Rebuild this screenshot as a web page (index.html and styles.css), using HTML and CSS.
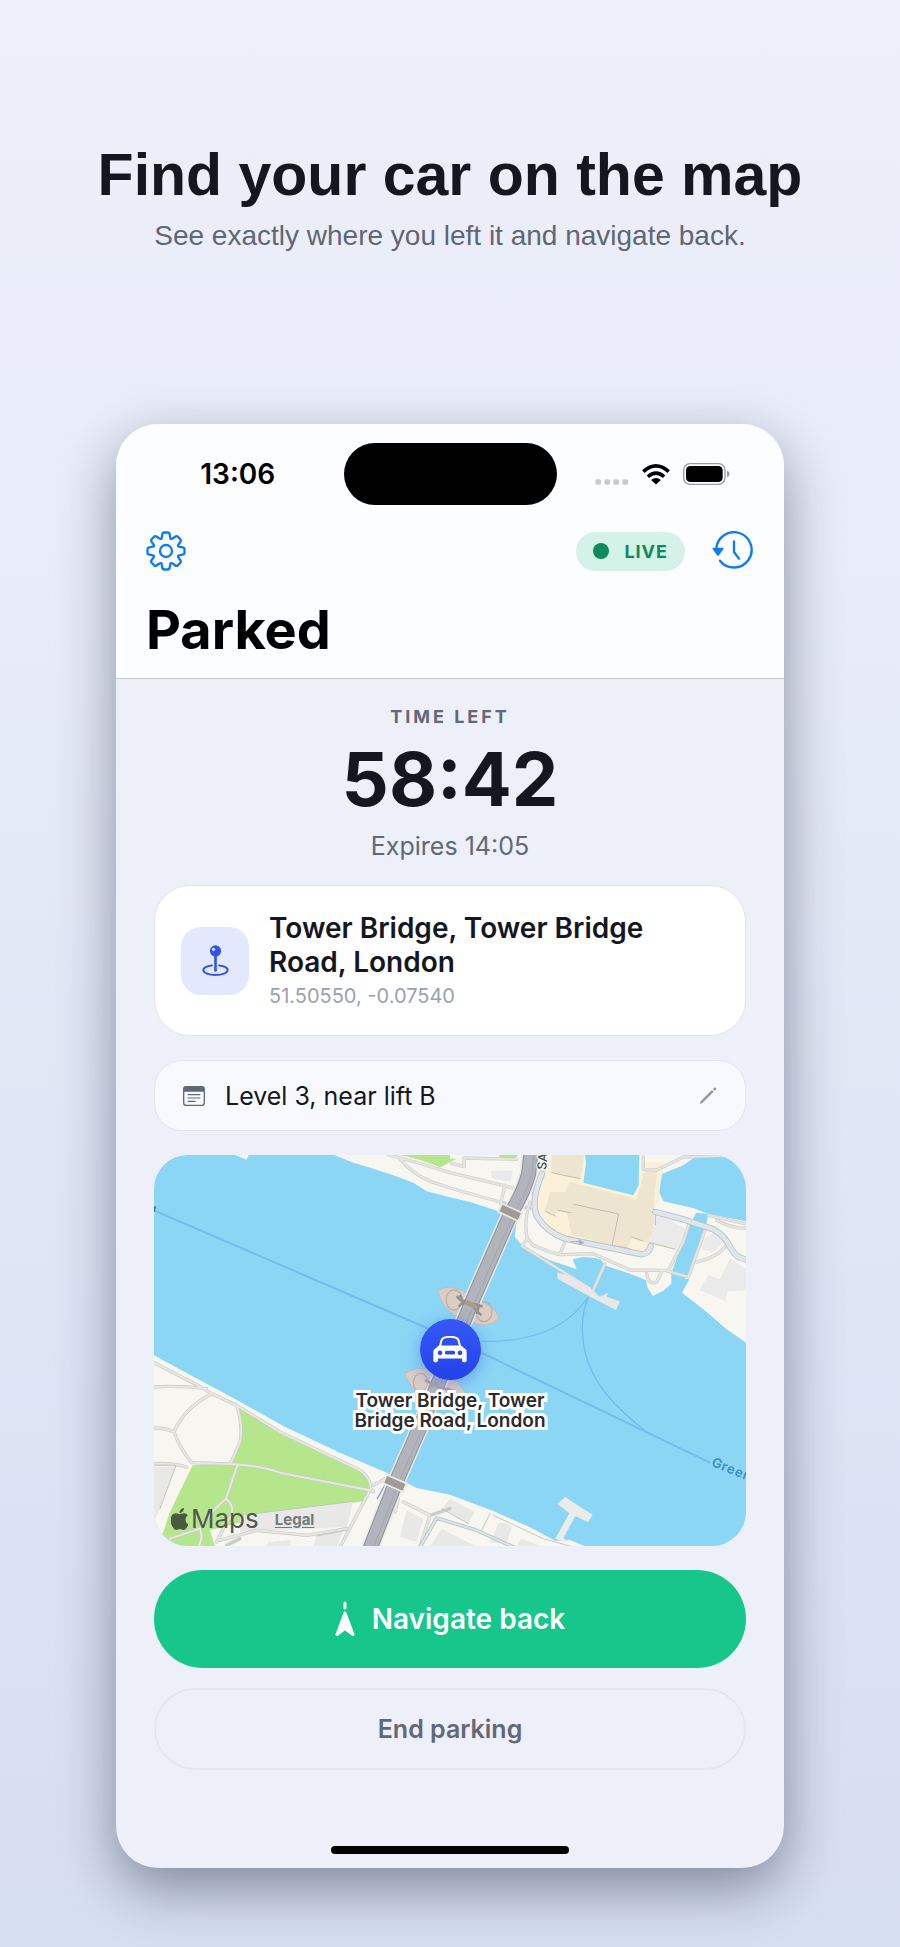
FILE: index.html
```html
<!DOCTYPE html>
<html lang="en">
<head>
<meta charset="utf-8">
<meta name="viewport" content="width=device-width, initial-scale=1">
<title>Find your car on the map</title>
<link rel="stylesheet" href="styles.css">
</head>
<body>
<main class="page">
  <header class="intro">
    <h1 class="intro-title">Find your car on the map</h1>
    <p class="intro-text">See exactly where you left it and navigate back.</p>
  </header>

  <section class="phone" aria-label="Parking app">
    <div class="top">
      <div class="status">
        <span class="clock">13:06</span>
        <span class="island"></span>
        <span class="indicators">
          <svg class="dots" viewBox="0 0 102 18" aria-hidden="true"><g fill="#c9cacd"><rect x="1" y="1" width="17" height="16" rx="5"/><rect x="28" y="1" width="17" height="16" rx="5"/><rect x="55" y="1" width="17" height="16" rx="5"/><rect x="82" y="1" width="17" height="16" rx="5"/></g></svg>
          <svg class="wifi" viewBox="0 0 86 64" aria-hidden="true"><path d="M4 23Q43-12 82 23M18 39Q43 17 68 39" fill="none" stroke="#000" stroke-width="11"/><path d="M43 63 28 49Q43 37 58 49Z"/></svg>
          <svg class="battery" viewBox="0 0 141 66" aria-hidden="true"><rect x="2" y="2" width="124" height="62" rx="19" fill="none" stroke="#9b9b9e" stroke-width="4"/><rect x="9" y="9" width="110" height="48" rx="13"/><path d="M132 23q8 3 8 10t-8 10Z" fill="#9b9b9e"/></svg>
        </span>
      </div>
      <div class="toolbar">
        <button class="icon-button" type="button" aria-label="Settings">
          <svg class="gear" viewBox="-20 -20 40 40" fill="none" stroke="#0f7bf2" stroke-width="2.300">
            <defs><path id="tooth" stroke-linecap="round" d="M-5-12.100Q-4.300-12.500-4.100-14L-3.700-16.500Q-3.400-18.500-1.800-18.500H1.800Q3.400-18.500 3.700-16.500L4.100-14Q4.300-12.500 5-12.100"/></defs>
            <use href="#tooth"/><use href="#tooth" transform="rotate(45)"/><use href="#tooth" transform="rotate(90)"/><use href="#tooth" transform="rotate(135)"/><use href="#tooth" transform="rotate(180)"/><use href="#tooth" transform="rotate(225)"/><use href="#tooth" transform="rotate(270)"/><use href="#tooth" transform="rotate(315)"/>
            <circle r="6"/>
          </svg>
        </button>
        <div class="toolbar-end">
          <span class="live"><span class="live-dot"></span>LIVE</span>
          <button class="icon-button" type="button" aria-label="History">
            <svg class="history" viewBox="0 0 126 118" fill="none" stroke="#0f7bf2" stroke-width="7" stroke-linecap="round" stroke-linejoin="round"><path d="M13 52A53 53 0 1 1 24 88M66 30V62L81 82"/><path d="M4 52H32L18 71Z" fill="#0f7bf2" stroke-width="5"/></svg>
          </button>
        </div>
      </div>
      <h2 class="screen-title">Parked</h2>
    </div>

    <div class="content">
      <div class="timer">
        <p class="timer-label">TIME LEFT</p>
        <p class="timer-value">58:42</p>
        <p class="timer-expiry">Expires 14:05</p>
      </div>

      <article class="place">
        <span class="place-icon">
          <svg viewBox="0 0 88 98" aria-hidden="true"><g fill="none" stroke="#2f55ec"><path d="M33 64C17 66 7 71 7 78 7 87 24 93 44 93S81 87 81 78C81 71 71 66 55 64" stroke-width="6" stroke-linecap="round"/><path d="M44 28V79" stroke-width="8" stroke-linecap="round"/></g><circle cx="44" cy="20" r="17" fill="#2f55ec"/><circle cx="38" cy="15" r="5" fill="#dfe5ff"/></svg>
        </span>
        <div class="place-text">
          <h3 class="place-name">Tower Bridge, Tower Bridge Road, London</h3>
          <p class="place-coords">51.50550, -0.07540</p>
        </div>
      </article>

      <div class="note">
        <svg class="note-icon" viewBox="0 0 66 60" aria-hidden="true"><rect x="2" y="2" width="62" height="56" rx="8" fill="none" stroke="#626877" stroke-width="4"/><path d="M2 17V9q0-8 8-8h46q8 0 8 8v8Z" fill="#626877"/><path d="M14 26H52M14 36H52M14 46H38" stroke="#626877" stroke-width="3.500"/></svg>
        <span class="note-text">Level 3, near lift B</span>
        <button class="icon-button" type="button" aria-label="Edit note">
          <svg class="pencil" viewBox="0 0 54 54" fill="#9298a8"><path d="M2 51 5 43 39 9 44 14 10 48ZM42 6 45 3Q48 0 51 3T50 9L47 11Z"/></svg>
        </button>
      </div>

      <div class="map">
        <svg class="map-art" viewBox="0 0 1776 1173" preserveAspectRatio="xMidYMid slice" aria-hidden="true">
          <rect width="1776" height="1173" fill="#8bd6f5"/>

          <!-- north bank -->
          <g transform="translate(888 -39)" stroke-linejoin="round" stroke-linecap="round">
            <path d="M-645 39H-604L-610 53ZM-347 39L-290 62-230 80-170 100-110 122-70 148 0 166 60 180 146 208 172 222 200 240 194 284 220 314 300 355 380 382 368 352 400 345 440 348 470 372 540 395 588 415 592 436 608 462 640 446 664 425 664 385 700 410 718 412 696 452 758 500 830 562 888 602V39Z" fill="#f7f6f1"/>
            <path d="M-152 39H0L0 50 20 50-30 76Q-90 50-152 39M148 39H205L195 48 148 51Z" fill="#b5e68c"/>
            <path d="M275 39H405L400 120 545 155 565 130 580 60 640 60 632 172 612 200 610 320 580 330 320 285 255 190Z" fill="#fbf1d9"/>
            <path d="M305 39H402L392 110 303 94ZM360 120L560 172 585 82 622 84 612 175 612 240 598 302 545 290 530 320 485 312 365 278 350 212 320 205 315 222 285 208 300 150 345 150Z" fill="#eee5d1"/>
            <path d="M405 39H568L566 130 550 160 400 122 408 62ZM735 45L888 39V238L775 216 730 198 640 178 628 150 636 96 700 70Z" fill="#8bd6f5"/>
            <path d="M738 212L775 216 768 250 722 400 700 412 664 396 692 310Z" fill="#8bd6f5"/>
            <path d="M380 365L420 350 452 352 462 368 436 430Z" fill="#8bd6f5"/>
            <path d="M618 215L706 258 700 300 676 322 600 300ZM122 86H188L182 120 125 108ZM760 290L790 272 820 300 790 330 755 322ZM840 350L888 380V445L832 448 826 478 748 444 775 400 810 412Z" fill="#ebeaea"/>
            <path d="M305 92L390 110M372 187L506 216 486 310 540 320M286 208L316 222M324 205L362 212M545 284L580 298M616 218V248M600 302L676 322" fill="none" stroke="#c4bdae" stroke-width="3"/>
            <g fill="none" stroke="#cfcfcc" stroke-width="10"><path d="M-185 39Q-100 60 0 92L160 130 250 155M-150 50Q-120 90-60 118L0 138 150 180 240 200M5 64L42 74 42 48 200 52M165 130L152 185M240 180Q220 240 232 290L250 310 300 330 330 338 430 335 540 384 645 385 715 405 770 250M232 290L216 312 420 440M345 300L330 335M465 365L425 455M580 45V82L620 84 700 45 888 39M720 235L700 300 655 385M590 395Q595 430 620 420L635 390M775 220L888 246M800 235Q850 262 888 258M740 360Q820 340 832 300"/></g>
            <g fill="none" stroke="#e4e4e1" stroke-width="6"><path d="M-185 39Q-100 60 0 92L160 130 250 155M-150 50Q-120 90-60 118L0 138 150 180M5 64L42 74 42 48 200 52M165 130L152 185M240 180Q220 240 232 290L250 310 300 330 330 338 430 335 540 384 645 385 715 405 770 250M232 290L216 312 420 440M345 300L330 335M465 365L425 455M580 45V82L620 84 700 45 888 39M720 235L700 300 655 385M590 395Q595 430 620 420L635 390M775 220L888 246M800 235Q850 262 888 258M740 360Q820 340 832 300"/></g>
            <path d="M276 95Q240 180 262 225 290 270 345 290L575 337Q598 334 602 312M616 210L700 232 790 262Q825 280 842 318 860 350 888 352" fill="none" stroke="#b7bfc6" stroke-width="19"/>
            <path d="M276 95Q240 180 262 225 290 270 345 290L575 337Q598 334 602 312M616 210L700 232 790 262Q825 280 842 318 860 350 888 352" fill="none" stroke="#dfe5ea" stroke-width="14"/>
            <path d="M362 297H386V291L404 303 386 309V301H362Z" fill="#aeb5bb"/>
            <path d="M322 392L345 397 420 438 436 452 450 464 474 452 470 464 510 478 498 504 432 470 322 410Z" fill="#e8e8e6"/>
          </g>

          <!-- south bank -->
          <g transform="translate(-42 561)" stroke-linejoin="round" stroke-linecap="round">
            <path d="M42 40L130 88 280 168 430 252 600 332 740 392 830 438 930 458 1062 508 1170 556 1245 596 1290 594 1340 615H42Z" fill="#f7f6f1"/>
            <path d="M293 195L420 275 640 375Q690 395 694 430L680 476 400 515 210 565 225 615H55L90 510 158 370 270 364 302 290Z" fill="#b5e68c"/>
            <path d="M42 375H108L60 500 42 540ZM300 520L640 480 620 555 300 570ZM385 600L450 594 455 615H380ZM530 578L610 565 590 615H520ZM800 505L850 530 830 600 780 585ZM930 470L1004 510 985 545 905 500ZM1075 545Q1090 535 1116 555L1100 602H1050ZM1145 590L1210 615H1130ZM905 560L1010 615H870Z" fill="#e8e8e7"/>
            <g fill="none" stroke="#cbcbc8" stroke-width="10"><path d="M42 62L170 128 215 155 290 190 420 270 640 375Q690 395 692 440L700 450M42 135Q110 130 200 140M215 155Q130 200 102 270 120 320 155 362L270 366Q360 370 420 392L700 447M42 258Q80 258 102 270M42 365Q100 362 140 375M290 190Q310 250 300 300L272 364M292 370L258 470Q200 520 180 560 150 570 90 590L85 615M258 470Q295 500 260 540L230 600M180 560Q190 590 175 615M240 595L350 565 500 580 620 560M692 440L600 615M260 610L300 590M775 470L765 510M790 480L870 520 840 615M870 520L930 500M700 430L735 410"/></g>
            <g fill="none" stroke="#e6e6e3" stroke-width="6"><path d="M42 62L170 128 215 155 290 190 420 270 640 375Q690 395 692 440L700 450M42 135Q110 130 200 140M215 155Q130 200 102 270 120 320 155 362L270 366Q360 370 420 392L700 447M42 258Q80 258 102 270M42 365Q100 362 140 375M290 190Q310 250 300 300L272 364M292 370L258 470Q200 520 180 560 150 570 90 590L85 615M258 470Q295 500 260 540L230 600M180 560Q190 590 175 615M240 595L350 565 500 580 620 560M692 440L600 615M775 470L765 510M790 480L870 520 840 615M700 430L735 410"/></g>
            <path d="M42 370H108L60 500M305 520L640 478M530 582L620 565M905 500L985 545M1050 515L1020 575M1060 520L1210 590 1300 615" fill="none" stroke="#c6c6c4" stroke-width="3"/>
            <path d="M840 615L890 528 1010 565 1120 615" fill="none" stroke="#b9c3c4" stroke-width="11"/>
            <path d="M840 615L890 528 1010 565 1120 615" fill="none" stroke="#dde5e6" stroke-width="6"/>
            <path d="M1275 465L1358 518 1344 541 1306 522 1270 588 1284 601 1246 590 1288 514 1252 485 1262 478Z" fill="#ebebe9"/>
            <path d="M712 470L733 432" stroke="#7ba2e6" stroke-width="4"/>
          </g>

          <!-- ferry routes -->
          <g fill="none" stroke="#74bdea" stroke-width="6"><path d="M0 166L818 519 988 596 1668 923"/><path stroke-width="4" d="M1303 426C1240 520 1130 562 983 559M1303 426C1280 480 1284 530 1288 561 1303 681 1388 761 1478 831"/></g>
          <path d="M0 155L6 153 2 170H0Z" fill="#32648e"/>

          <!-- bridge piers -->
          <g stroke="#c3b3a7" stroke-width="2"><path d="M852 408Q882 386 925 407L990 444Q1030 462 1036 492 1000 520 962 506L900 480Q860 450 852 408Z" fill="#d9cdc5"/><path d="M752 655Q790 632 830 645L910 680Q935 710 950 740 900 750 850 740L790 716Q765 690 752 655Z" fill="#d9cdc5"/><g fill="none" stroke="#bfb0a5" stroke-width="4"><ellipse cx="900" cy="435" rx="24" ry="30"/><ellipse cx="990" cy="470" rx="24" ry="30"/><ellipse cx="800" cy="683" rx="22" ry="28"/></g></g>

          <!-- bridge -->
          <g transform="translate(888 -39)" fill="none">
            <path d="M243 30 236 95Q222 150 182 215L72 465-92 860-162 1020-240 1220" stroke="#e9eaec" stroke-width="54"/>
            <path d="M243 30 236 95Q222 150 182 215L72 465-92 860-162 1020-240 1220" stroke="#8f9298" stroke-width="45"/>
            <path d="M243 30 236 95Q222 150 182 215L72 465-92 860-162 1020-240 1220" stroke="#b1b4bb" stroke-width="39"/>
            <path d="M252 30 245 95Q231 150 191 215L81 465-83 860-153 1020-231 1220" stroke="#9da0a7" stroke-width="2"/>
            <path d="M148 196 213 226M-198 1010-133 1038" stroke="#eee7e3" stroke-width="32"/>
            <path d="M153 198 208 224M-193 1012-138 1036" stroke="#a19b98" stroke-width="22"/>
            <path d="M20 462Q35 482 58 484T98 494M26 494 46 474M72 498 94 520M30 458 42 488M88 486 80 516" stroke="#97938f" stroke-width="8"/>
            <path d="M46 480 76 494" stroke="#a99b8a" stroke-width="14"/>
            <path d="M-75 714Q-30 740 16 748M-65 736-40 720M-10 738 10 760" stroke="#aaa4aa" stroke-width="9"/>
          </g>
          <text class="map-street" transform="translate(1176 46) rotate(-84)">SA</text>
          <text class="map-route" transform="translate(1670 932) rotate(22)">Green</text>
        </svg>

        <div class="marker">
          <span class="marker-pin">
            <svg viewBox="0 0 102 80" aria-hidden="true"><path d="M20 34 25 14Q28 4 38 3 51 1 64 3 74 4 77 14L82 34" fill="none" stroke="#fff" stroke-width="6"/><path fill="#fff" fill-rule="evenodd" d="M12 33Q14 28 20 28H82Q88 28 90 33L99 40Q101 42 101 48V73Q101 78 96 78H92Q87 78 87 73V67H15V73Q15 78 10 78H6Q1 78 1 73V48Q1 42 3 40ZM21 43a7 7 0 1 0 .1 0ZM81 43a7 7 0 1 0 .1 0ZM41 44a5 5 0 0 0 0 11H61a5 5 0 0 0 0-11Z"/></svg>
          </span>
          <span class="marker-label">Tower Bridge, Tower<br>Bridge Road, London</span>
        </div>

        <div class="attribution">
          <span class="brand">
            <svg class="apple" viewBox="3 0 18 24" aria-hidden="true"><path fill="#4a5a3c" d="M12.152 6.896c-.948 0-2.415-1.078-3.960-1.040-2.040.027-3.910 1.183-4.961 3.014-2.117 3.675-.546 9.103 1.519 12.090 1.013 1.454 2.208 3.090 3.792 3.039 1.520-.065 2.090-.987 3.935-.987 1.831 0 2.350.987 3.960.948 1.637-.026 2.676-1.480 3.676-2.948 1.156-1.688 1.636-3.325 1.662-3.415-.039-.013-3.182-1.221-3.220-4.857-.026-3.040 2.480-4.494 2.597-4.559-1.429-2.090-3.623-2.324-4.390-2.376-2-.156-3.675 1.090-4.610 1.090zM15.530 3.830c.843-1.012 1.400-2.427 1.245-3.830-1.207.052-2.662.805-3.532 1.818-.780.896-1.454 2.338-1.273 3.714 1.338.104 2.715-.688 3.559-1.701"/></svg>
            Maps
          </span>
          <a class="legal" href="#legal">Legal</a>
        </div>
      </div>

      <button class="action action-primary" type="button">
        <svg class="nav-icon" viewBox="0 0 20 36" aria-hidden="true"><path d="M10 2V7" stroke="#fff" stroke-width="3" stroke-linecap="round"/><path d="M10 12 2 33.500 10 27.500 18 33.500Z" fill="#fff" stroke="#fff" stroke-width="3" stroke-linejoin="round"/></svg>
        Navigate back
      </button>
      <button class="action action-secondary" type="button">End parking</button>
    </div>
    <div class="home-bar"></div>
  </section>
</main>
</body>
</html>
```
FILE: styles.css
```css
* {
  box-sizing: border-box;
}

body {
  margin: 0;
  font-family: Inter, "Liberation Sans", sans-serif;
  color: #14171f;
  background: #d6def1;
}

h1, h2, h3, p {
  margin: 0;
}

button {
  font: inherit;
  border: 0;
  cursor: pointer;
}

svg {
  display: block;
}

.page {
  padding: 139px 24px 82px;
  background: linear-gradient(#edeffa 0%, #e9edf9 25%, #e2e8f6 50%, #d6def1 100%);
}

.intro {
  text-align: center;
  font-family: "Liberation Sans", Arial, sans-serif;
}

.intro-title {
  font-size: 59px;
  line-height: 72px;
}

.intro-text {
  margin-top: 8px;
  font-size: 28px;
  line-height: 34px;
  color: #5f6676;
}

.phone {
  max-width: 668px;
  margin: 171px auto 0;
  overflow: hidden;
  border-radius: 42px;
  background: #edeff9;
  box-shadow: 0 20px 56px rgba(18, 24, 48, 0.44);
}

.top {
  padding: 19px 30px 15px;
  background: #fcfdff;
  border-bottom: 1px solid #c6c9d0;
}

.status {
  display: grid;
  grid-template-columns: 1fr 213px 1fr;
  align-items: center;
}

.clock {
  font-size: 28px;
  line-height: 34px;
  font-weight: 600;
  color: #000;
  text-align: center;
  padding-right: 14px;
}

.island {
  height: 62px;
  border-radius: 31px;
  background: #000;
}

.indicators {
  display: flex;
  align-items: flex-end;
  gap: 13px;
  padding-left: 38px;
}

.dots {
  width: 34px;
  height: 6px;
}

.wifi {
  width: 28px;
  height: 21px;
}

.battery {
  width: 47px;
  height: 22px;
}

.toolbar {
  display: flex;
  align-items: center;
  justify-content: space-between;
  margin-top: 26px;
}

.toolbar-end {
  display: flex;
  align-items: center;
  gap: 27px;
}

.icon-button {
  display: flex;
  padding: 0;
  background: none;
}

.gear {
  width: 40px;
  height: 40px;
}

.live {
  display: flex;
  align-items: center;
  gap: 15px;
  height: 39px;
  padding: 0 17px;
  border-radius: 20px;
  background: #d5f2e8;
  color: #0e8a5f;
  font-size: 18px;
  font-weight: 700;
  letter-spacing: 1px;
}

.live-dot {
  width: 16px;
  height: 16px;
  border-radius: 50%;
  background: #0e8a5f;
}

.history {
  width: 42px;
  height: 40px;
}

.screen-title {
  margin-top: 26px;
  font-size: 54px;
  line-height: 66px;
  font-weight: 700;
  color: #000;
}

.content {
  display: flex;
  flex-direction: column;
  padding: 26px 38px 0;
}

.timer {
  text-align: center;
  color: #626877;
}

.timer-label {
  font-size: 18px;
  line-height: 24px;
  font-weight: 700;
  letter-spacing: 3px;
}

.timer-value {
  margin-top: 10px;
  font-size: 74px;
  line-height: 80px;
  font-weight: 700;
  color: #14171f;
}

.timer-expiry {
  margin-top: 10px;
  font-size: 25px;
  line-height: 34px;
}

.place {
  display: flex;
  align-items: center;
  gap: 20px;
  margin-top: 22px;
  padding: 25px 26px;
  border: 1px solid #e3e5ee;
  border-radius: 36px;
  background: #fff;
}

.place-icon {
  display: grid;
  place-items: center;
  flex: none;
  width: 68px;
  height: 68px;
  border-radius: 20px;
  background: #e4e8fe;
}

.place-icon svg {
  width: 29px;
  height: 33px;
}

.place-name {
  font-size: 28px;
  line-height: 34px;
  font-weight: 600;
}

.place-coords {
  margin-top: 3px;
  font-size: 20px;
  line-height: 28px;
  color: #9aa1b0;
}

.note {
  display: flex;
  align-items: center;
  gap: 20px;
  height: 71px;
  margin-top: 24px;
  padding: 0 28px;
  border: 1px solid #e3e5ee;
  border-radius: 28px;
  background: #f8f9fe;
}

.note-icon {
  width: 22px;
  height: 20px;
}

.note-text {
  flex: 1;
  font-size: 25px;
  line-height: 32px;
}

.pencil {
  width: 18px;
  height: 18px;
}

.map {
  position: relative;
  margin-top: 24px;
  overflow: hidden;
  border-radius: 34px;
}

.map-art {
  width: 100%;
  height: auto;
}

.map-street {
  font-size: 38px;
  font-weight: 500;
  fill: #4b4b4b;
  stroke: #fff;
  stroke-width: 6px;
  paint-order: stroke;
}

.map-route {
  font-size: 40px;
  font-weight: 600;
  letter-spacing: 2px;
  fill: #3c8fc4;
}

.marker {
  position: absolute;
  inset: 164px 0 auto;
  display: flex;
  flex-direction: column;
  align-items: center;
  gap: 11px;
}

.marker-pin {
  display: grid;
  place-items: center;
  width: 61px;
  height: 61px;
  border-radius: 50%;
  background: linear-gradient(#3658f8, #2442ea);
  box-shadow: 0 4px 16px rgba(50, 80, 220, 0.4);
}

.marker-pin svg {
  width: 34px;
  height: 27px;
}

.marker-label {
  font-size: 19px;
  line-height: 20px;
  font-weight: 600;
  text-align: center;
  color: #2b2b2d;
  -webkit-text-stroke: 6px #fff;
  paint-order: stroke fill;
}

.attribution {
  position: absolute;
  left: 17px;
  bottom: 11px;
  display: flex;
  align-items: center;
  gap: 16px;
}

.brand {
  display: flex;
  align-items: center;
  gap: 3px;
  font-size: 26px;
  line-height: 32px;
  color: #4f5a4d;
}

.apple {
  width: 17px;
  height: 22px;
}

.legal {
  font-size: 15px;
  font-weight: 700;
  color: #77787a;
  text-underline-offset: 2px;
}

.action {
  display: flex;
  align-items: center;
  justify-content: center;
  gap: 17px;
  font-weight: 600;
}

.action-primary {
  height: 98px;
  margin-top: 24px;
  border-radius: 49px;
  background: #16c68a;
  color: #fff;
  font-size: 28px;
}

.nav-icon {
  width: 20px;
  height: 36px;
}

.action-secondary {
  height: 82px;
  margin-top: 20px;
  border: 2px solid #e5e7f0;
  border-radius: 41px;
  background: transparent;
  color: #626877;
  font-size: 25px;
}

.home-bar {
  width: 238px;
  height: 8px;
  margin: 76px auto 14px;
  border-radius: 4px;
  background: #000;
}
```
